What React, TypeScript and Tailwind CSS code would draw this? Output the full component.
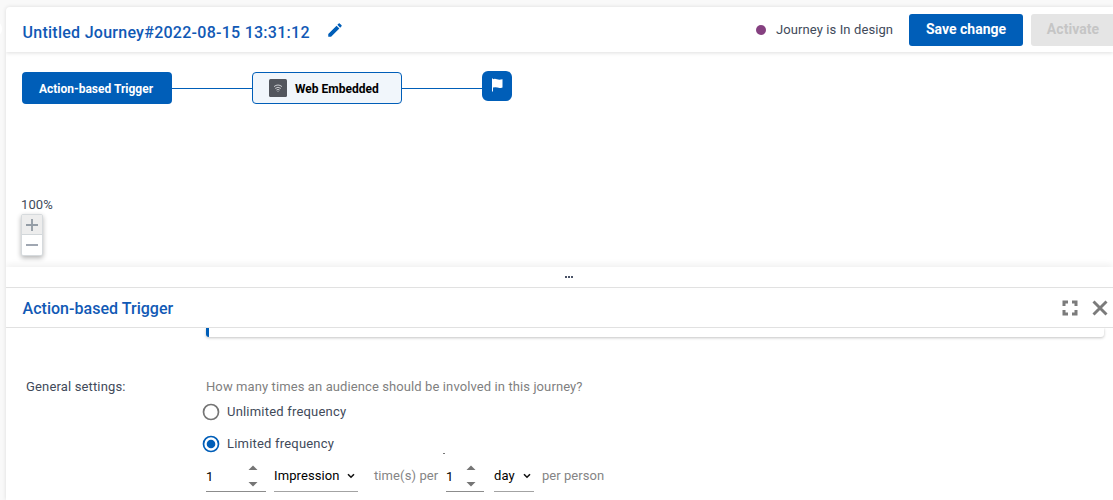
import React from "react";

const Spinner = ({ className }: { className: string }) => (
  <div className={`flex h-[30px] items-start justify-between border-b border-[#8c8c8c] text-black ${className}`}>
    <span className="pt-[7px] leading-[16px]">1</span>
    <svg className="mt-[3px]" width="10" height="24" viewBox="0 0 10 24" fill="#757575">
      <path d="M.5 5 5 .5 9.500 5z" />
      <path d="M.5 17h9L5 21.500z" />
    </svg>
  </div>
);

const Select = ({ label, className }: { label: string; className: string }) => (
  <div className={`flex h-[30px] items-start justify-between border-b border-[#a3a3a3] text-black ${className}`}>
    <span className="pt-[6px] leading-[16px] tracking-[0.1px]">{label}</span>
    <svg className="mt-[11px] mr-[3px]" width="8" height="6" viewBox="0 0 8 6" fill="none" stroke="#111" strokeWidth="1.600">
      <path d="M1 1.200 4 4.200 7 1.200" />
    </svg>
  </div>
);

const Radio = ({ checked, label }: { checked?: boolean; label: string }) => (
  <label className="flex h-[18px] items-center gap-[7px] tracking-[0.2px]">
    <svg width="18" height="18" viewBox="0 0 18 18">
      <circle cx="9" cy="9" r="7.500" fill="none" stroke={checked ? "#005eb8" : "#757575"} strokeWidth="1.700" />
      {checked && <circle cx="9" cy="9" r="4.300" fill="#005eb8" />}
    </svg>
    <span className="pb-[2px]">{label}</span>
  </label>
);

export default function App() {
  return (
    <div className="relative h-[500px] w-full overflow-hidden bg-[#f9f9f9] pt-[7px] pl-[6px] font-['Roboto','Liberation_Sans',sans-serif] text-[13px] tracking-[0.1px] text-[#414a5a]">
      <div className="absolute top-[20px] -left-[16px] h-[18px] w-[18px] rounded-full bg-white" />
      <main className="flex h-[493px] flex-col overflow-hidden rounded-tl-[4px] bg-white shadow-[0_0_4px_rgba(0,0,0,0.12)]">
        <header className="flex h-[45px] shrink-0 items-center pl-[16.500px] shadow-[0_1px_4px_rgba(0,0,0,0.13)]">
          <h1 className="w-[303px] pt-[7px] text-[16px] leading-[20px] font-medium tracking-[0.265px] whitespace-nowrap text-[#1159b5]">
            Untitled Journey#2022-08-15 13:31:12
          </h1>
          <svg width="18" height="18" viewBox="0 0 24 24" fill="#005eb8">
            <path d="M3 17.250V21h3.750L17.810 9.940l-3.750-3.750L3 17.250zM20.710 7.040a1 1 0 0 0 0-1.410l-2.340-2.340a1 1 0 0 0-1.410 0l-1.830 1.830 3.750 3.750 1.830-1.830z" />
          </svg>
          <div className="ml-auto flex shrink-0 items-center">
            <span className="h-[10px] w-[10px] rounded-full bg-[#854080]" />
            <span className="ml-[10px] w-[133px] whitespace-nowrap">Journey is In design</span>
            <button className="h-[32px] w-[114px] rounded-[3px] bg-[#005eb8] text-[14px] font-bold tracking-[0px] text-white">Save change</button>
            <button className="-mr-[4px] ml-[8px] h-[32px] w-[86px] rounded-[3px] bg-[#e5e5e5] pr-[2px] text-[14px] font-bold tracking-[0.05px] text-[#c5c5c5]">Activate</button>
          </div>
        </header>
        <section className="flex h-[215px] shrink-0 flex-col pt-[19px] pl-[16px]">
          <div className="flex h-[33px] items-center text-[12px] font-bold tracking-[0px]">
            <div className="flex h-[32px] w-[150px] items-center justify-center rounded-[4px] bg-[#005eb8] pt-[2px] pr-[2px] text-white">Action-based Trigger</div>
            <div className="mt-[2px] h-px w-[80px] bg-[#005eb8]" />
            <div className="flex h-[32px] w-[150px] items-center gap-[8px] rounded-[4px] border border-[#005eb8] bg-[#f1f6fb] pl-[16px] text-black">
              <svg width="18" height="18" viewBox="0 0 18 18" fill="none" stroke="#d8d9dc" strokeWidth=".9">
                <rect width="18" height="18" rx="1.500" fill="#53565d" stroke="none" />
                <path d="M5 7.600q4-3.200 8 0M6.200 9.400q2.800-2.300 5.600 0M7.500 11q1.500-1.200 3 0" />
                <circle cx="9" cy="12.200" r=".5" fill="#d8d9dc" stroke="none" />
              </svg>
              <span className="pt-[2px]">Web Embedded</span>
            </div>
            <div className="mt-[2px] h-px w-[80px] bg-[#005eb8]" />
            <div className="-mt-[4px] flex h-[30px] w-[30px] items-center justify-center rounded-[6px] bg-[#005eb8]">
              <svg className="-mt-px" width="12" height="14" viewBox="0 0 12 14" fill="white">
                <path d="M1 .5h1v.7q2-.7 4 .1t5.500 0v8.200q-3 1-5 .1t-4.500 0V13.500H1z" />
              </svg>
            </div>
          </div>
          <div className="mt-[92px] -ml-px leading-[17px]">100%</div>
          <div className="mt-px -ml-px flex h-[42px] w-[22px] flex-col rounded-[2px] border border-[#d6dadd] bg-white shadow-[0_2px_5px_rgba(0,0,0,0.3)]">
            <div className="flex h-[20px] items-center justify-center border-b border-[#d2d7da] bg-[#ededed]">
              <svg width="12" height="12" viewBox="0 0 12 12" stroke="#949da6" strokeWidth="1.900"><path d="M6 0v12M0 6h12" /></svg>
            </div>
            <div className="flex h-[20px] items-center justify-center">
              <div className="h-[2px] w-[12px] bg-[#a0a7b2]" />
            </div>
          </div>
        </section>
        <div className="z-10 flex h-[21px] shrink-0 items-center justify-center border-b border-[#e1e1e1] bg-white pr-[1px] shadow-[0_-3px_6px_rgba(0,0,0,0.055)]">
          <div className="flex gap-px pl-[19px]">
            <i className="h-[2px] w-[2px] bg-[#4a5367]" /><i className="h-[2px] w-[2px] bg-[#4a5367]" /><i className="h-[2px] w-[2px] bg-[#4a5367]" />
          </div>
        </div>
        <div className="flex h-[40px] shrink-0 items-center border-b border-[#e1e1e1] pl-[16.500px]">
          <h2 className="flex-1 pt-[2px] text-[16px] font-medium tracking-[0.03px] text-[#1159b5]">Action-based Trigger</h2>
          <svg width="16" height="16" viewBox="0 0 16 16" fill="none" stroke="#7b7b7b" strokeWidth="3">
            <path d="M2 6V2H6M10 2h4V6M14 10v4H10M6 14H2V10" />
          </svg>
          <svg className="mr-[5px] ml-[14px]" width="16" height="16" viewBox="0 0 16 16" stroke="#7b7b7b" strokeWidth="2.900">
            <path d="m1.500 1.500 13 13m0-13-13 13" />
          </svg>
        </div>
        <section className="flex min-h-0 flex-1 flex-col overflow-hidden">
          <div className="mr-[9px] ml-[200px] h-[9px] shrink-0 rounded-b-[3px] border-l-[3px] border-[#005eb8] bg-white shadow-[0_1px_3px_rgba(0,0,0,0.24)]" />
          <div className="flex pt-[41px] pl-[20px]">
            <div className="w-[180px] leading-[17px] tracking-[0.15px]">General settings:</div>
            <div className="leading-[17px]">
              <p className="text-[#7f7f7f]">How many times an audience should be involved in this journey?</p>
              <div className="mt-[8px] -ml-[4px] flex flex-col gap-[14px]">
                <Radio label="Unlimited frequency" />
                <Radio checked label="Limited frequency" />
              </div>
              <div className="ml-[237px] h-px w-[2px] bg-[#777]" />
              <div className="mt-[8px] flex w-[440px] items-start text-[#858585]">
                <Spinner className="w-[60px] pr-[8px]" />
                <Select label="Impression" className="ml-[8px] w-[84px]" />
                <span className="ml-[16px] w-[72px] pt-[5px] whitespace-nowrap">time(s) per</span>
                <Spinner className="w-[38px] pr-[8px]" />
                <Select label="day" className="ml-[10px] w-[40px]" />
                <span className="ml-[8px] pt-[5px] tracking-[0.04px] whitespace-nowrap">per person</span>
              </div>
            </div>
          </div>
        </section>
      </main>
    </div>
  );
}
